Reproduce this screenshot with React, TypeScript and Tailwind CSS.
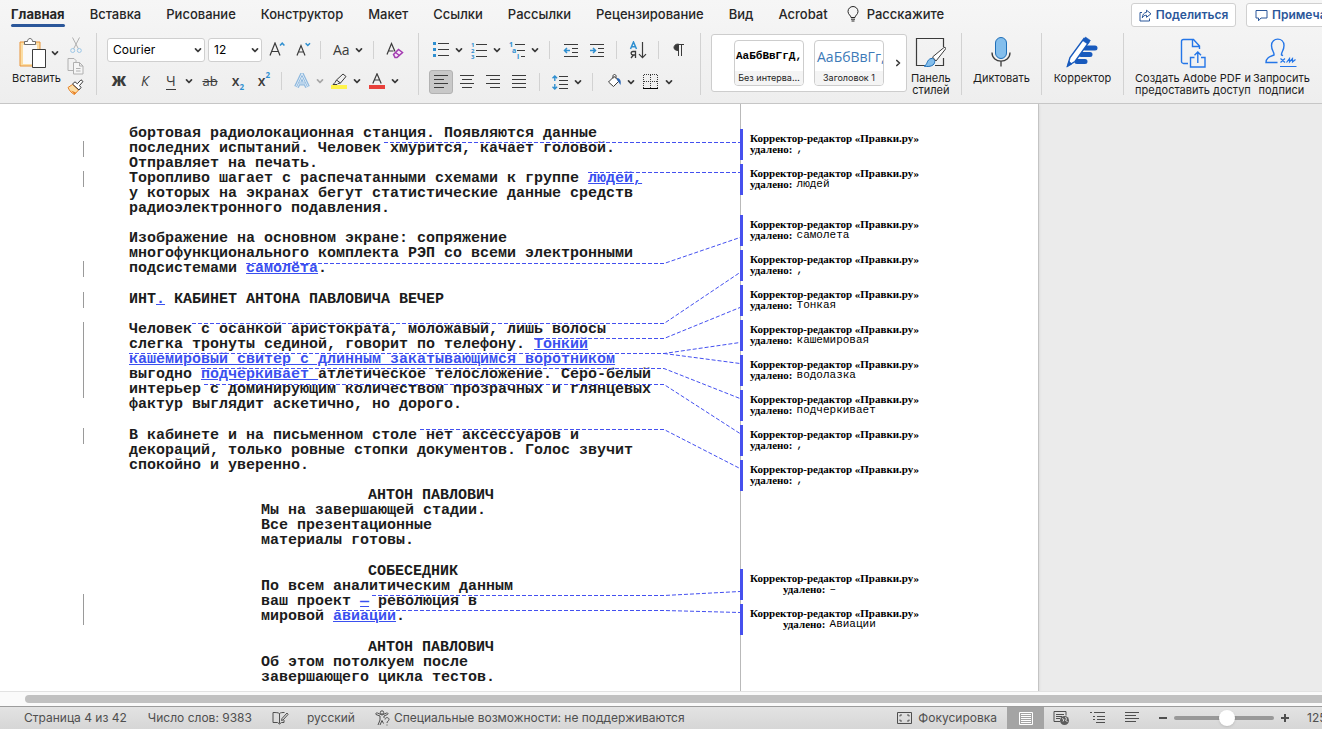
import type { ReactNode } from "react";
import clsx from "clsx";

const tabs = [
  "Вставка",
  "Рисование",
  "Конструктор",
  "Макет",
  "Ссылки",
  "Рассылки",
  "Рецензирование",
  "Вид",
  "Acrobat",
];

type Part = string | { ins: string };
type Line = { parts: Part[]; changed?: boolean; cue?: boolean };
type Block = { gap: string; indent?: boolean; lines: Line[] };

const l = (...parts: Part[]): Line => ({ parts });
const c = (...parts: Part[]): Line => ({ parts, changed: true });
const cue = (name: string): Line => ({ parts: [name], cue: true });
const ins = (text: string) => ({ ins: text });

const script: Block[] = [
  {
    gap: "mb-[15px]",
    lines: [
      l("бортовая радиолокационная станция. Появляются данные"),
      c("последних испытаний. Человек хмурится, качает головой."),
      l("Отправляет на печать."),
      c("Торопливо шагает с распечатанными схемами к группе ", ins("людей,")),
      l("у которых на экранах бегут статистические данные средств"),
      l("радиоэлектронного подавления."),
    ],
  },
  {
    gap: "mb-4",
    lines: [
      l("Изображение на основном экране: сопряжение"),
      l("многофункционального комплекта РЭП со всеми электронными"),
      c("подсистемами ", ins("самолёта"), "."),
    ],
  },
  {
    gap: "mb-[15px]",
    lines: [c("ИНТ", ins("."), " КАБИНЕТ АНТОНА ПАВЛОВИЧА ВЕЧЕР")],
  },
  {
    gap: "mb-4",
    lines: [
      c("Человек с осанкой аристократа, моложавый, лишь волосы"),
      c("слегка тронуты сединой, говорит по телефону. ", ins("Тонкий")),
      c(ins("кашемировый свитер с длинным закатывающимся воротником")),
      c(
        "выгодно ",
        ins("подчёркивает "),
        "атлетическое телосложение. Серо-белый"
      ),
      c("интерьер с доминирующим количеством прозрачных и глянцевых"),
      l("фактур выглядит аскетично, но дорого."),
    ],
  },
  {
    gap: "mb-[15px]",
    lines: [
      c("В кабинете и на письменном столе нет аксессуаров и"),
      l("декораций, только ровные стопки документов. Голос звучит"),
      l("спокойно и уверенно."),
    ],
  },
  {
    gap: "mb-4",
    indent: true,
    lines: [
      cue("АНТОН ПАВЛОВИЧ"),
      l("Мы на завершающей стадии."),
      l("Все презентационные"),
      l("материалы готовы."),
    ],
  },
  {
    gap: "mb-4",
    indent: true,
    lines: [
      cue("СОБЕСЕДНИК"),
      l("По всем аналитическим данным"),
      c("ваш проект ", ins("—"), " революция в"),
      c("мировой ", ins("авиации"), "."),
    ],
  },
  {
    gap: "mb-0",
    indent: true,
    lines: [
      cue("АНТОН ПАВЛОВИЧ"),
      l("Об этом потолкуем после"),
      l("завершающего цикла тестов."),
    ],
  },
];

const commentGroups = [
  { indent: false, items: [",", "людей"] },
  {
    indent: false,
    items: [
      "самолета",
      ",",
      "Тонкая",
      "кашемировая",
      "водолазка",
      "подчеркивает",
      ",",
      ",",
    ],
  },
  { indent: true, items: ["–", "Авиации"] },
];
const commentOffsets = ["mt-[25px]", "mt-5", "mt-[78px]"];

// from the changed word, along the line, then out to its comment
const connectors = [
  "384,38.5 740,38.5",
  "588,68.5 740,68.5",
  "246,159.5 664,159.5 740,133.5",
  "192,219.5 664,219.5 740,168.5",
  "534,234.5 664,234.5 740,203.5",
  "129,249.5 664,249.5 740,238.5",
  "664,249.5 740,259.5",
  "201,264.5 664,264.5 740,294.5",
  "204,280.5 664,280.5 740,329.5",
  "420,325.5 664,325.5 740,364.5",
  "372,491.5 664,491.5 740,487.5",
  "336,506.5 664,506.5 740,508.5",
];

function Chevron({ className }: { className?: string }) {
  return (
    <svg
      viewBox="0 0 8 8"
      className={clsx("size-2 shrink-0 text-[#3b3b3b]", className)}
      fill="none"
      stroke="currentColor"
      strokeWidth="1.7"
      strokeLinecap="round"
      strokeLinejoin="round"
    >
      <path d="M1.5 2.8 4 5.5 6.5 2.8" />
    </svg>
  );
}

function Sep({ className }: { className?: string }) {
  return <div className={clsx("h-[18px] w-px shrink-0 bg-[#d2d2d2]", className)} />;
}

function Tool({
  label,
  children,
  className = "w-[26px]",
  menu,
  muted,
}: {
  label: string;
  children: ReactNode;
  className?: string;
  menu?: boolean;
  muted?: boolean;
}) {
  return (
    <button
      aria-label={label}
      className={clsx(
        "flex h-6 shrink-0 items-center leading-5 text-[#3b3b3b]",
        menu ? "justify-between" : "justify-center",
        className
      )}
    >
      {children}
      {menu && <Chevron className={muted ? "opacity-40" : undefined} />}
    </button>
  );
}

function Icon({
  w,
  h,
  children,
  className,
}: {
  w: number;
  h: number;
  children: ReactNode;
  className?: string;
}) {
  return (
    <svg
      width={w}
      height={h}
      viewBox={`0 0 ${w} ${h}`}
      fill="none"
      stroke="currentColor"
      className={clsx("shrink-0", className)}
    >
      {children}
    </svg>
  );
}

function BigButton({ lines, children }: { lines: string[]; children: ReactNode }) {
  return (
    <button className="flex shrink-0 flex-col items-center whitespace-nowrap text-[11px] leading-3 text-[#1d1d1d]">
      <span className="mb-1 flex h-8 items-center">{children}</span>
      {lines.map((line) => (
        <span key={line}>{line}</span>
      ))}
    </button>
  );
}

function StyleCard({ sample, name, heading }: { sample: string; name: string; heading?: boolean }) {
  return (
    <button className="flex h-[46px] w-[70px] flex-col overflow-hidden rounded-[4px] border border-[#cdcdcd] bg-white">
      <span
        className={clsx(
          "flex h-[30px] w-full items-center whitespace-nowrap",
          heading
            ? "pl-[2px] font-['Open_Sans'] text-[14px] text-[#3d7ab8]"
            : "pl-px font-['Liberation_Mono'] text-[11px] font-bold text-black"
        )}
      >
        {sample}
      </span>
      <span className="w-full flex-1 bg-[#f4f4f4] text-center text-[9px] leading-[14px] text-[#1d1d1d]">
        {name}
      </span>
    </button>
  );
}

function TabBar() {
  return (
    <nav className="flex h-[30px] items-start pl-[11px] text-[13px] font-medium text-[#262626]">
      <div className="flex shrink-0 gap-[25px] whitespace-nowrap pt-1">
        <button className="flex flex-col font-bold leading-5">
          Главная
          <span className="h-[3px] w-full rounded-full bg-[#2b579a]" />
        </button>
        {tabs.map((tab) => (
          <button key={tab} className="h-5 leading-5">
            {tab}
          </button>
        ))}
        <button className="-ml-[6px] flex h-5 items-center gap-2 leading-5">
          <Icon w={12} h={16}>
            <path d="M4 11.5C4 9.5 1 8.500 1 5.500a5 5 0 0 1 10 0c0 3-3 4-3 6zM4 13.200h4M4.500 15h3" strokeWidth="1" />
          </Icon>
          Расскажите
        </button>
      </div>
      <div className="ml-auto flex w-[191px] shrink-0 gap-[10px] pt-[3px] font-semibold text-[#2b579a]">
        <button className="flex h-6 w-[105px] shrink-0 items-center justify-center gap-1 rounded-[3px] border border-[#d0d0d0] bg-white text-[12px]">
          <Icon w={13} h={13}>
            <path d="M3 3.500H1v8.500h9.500V9.500M7.500 1.200 12 4.800 7.500 8.300V6.200C5.500 6.200 4.300 7 3.300 8.800 3.500 5.500 5 3.600 7.500 3.300z" strokeLinejoin="round" />
          </Icon>
          Поделиться
        </button>
        <button className="flex h-6 w-[105px] shrink-0 items-center gap-1 rounded-[3px] border border-[#d0d0d0] bg-white pl-2 text-[12px]">
          <Icon w={13} h={13}>
            <path d="M1 1.500h11v7.500H6L3.500 11.800V9H1z" strokeLinejoin="round" />
          </Icon>
          Примечания
        </button>
      </div>
    </nav>
  );
}

function ClipboardGroup() {
  return (
    <div className="flex w-24 shrink-0 pl-3">
      <button className="flex w-[48px] flex-col items-start text-[11px] leading-3 text-[#1d1d1d]">
        <span className="mb-1 flex h-[35px] items-center gap-1 pl-[7px] pt-1">
          <Icon w={28} h={32}>
            <path d="M1 5h20v24H1z" fill="#fbdda4" stroke="#e8953a" />
            <path d="M4 8h14v19H4z" fill="#fafafa" stroke="none" />
            <path d="M5.500 7.500V4.500h3c0-4 5-4 5 0h3v3z" fill="#fff" stroke="#6b6b6b" />
            <path d="M13.500 12.500h13v18h-13z" fill="#fff" stroke="#3b3b3b" />
          </Icon>
          <Chevron />
        </span>
        Вставить
      </button>
      <div className="ml-[7px] flex flex-col items-center gap-1 pt-1">
        <button aria-label="Вырезать">
          <Icon w={12} h={17}>
            <path d="M2.500 0.500 8.500 12M9.500 0.500 3.500 12" stroke="#b0b0b0" />
            <circle cx="2.700" cy="13.500" r="2" stroke="#9cc6e6" />
            <circle cx="9.300" cy="13.500" r="2" stroke="#9cc6e6" />
          </Icon>
        </button>
        <button aria-label="Копировать">
          <Icon w={17} h={17} className="text-[#b0b0b0]">
            <path d="M6 12.500H1V0.500h6l2 2V5" />
            <path d="M6.500 4.500h6l3.500 3.500v8H6.500zM12.500 4.500V8H16M9 10.500h4.500M9 13h4.500" fill="#f5f5f5" />
          </Icon>
        </button>
        <button aria-label="Формат по образцу">
          <Icon w={17} h={16}>
            <path d="M1 8.500 5.500 5.500l6 5.500-4 4.500C5 14.500 2.500 12 1 8.500z" fill="#fbdda4" stroke="#e8832a" />
            <path d="M4 11.500l5 2-1.500 2z" fill="#e8832a" stroke="none" />
            <path d="M5.500 5 8 2.800l2.300 2 3.700-4 2 1.700-3.500 4 1.500 2-2 2.500z" fill="#fff" stroke="#3b3b3b" />
          </Icon>
        </button>
      </div>
    </div>
  );
}

function FontGroup() {
  return (
    <div className="flex w-[322px] shrink-0 flex-col gap-2 border-l border-[#d2d2d2] pl-[10px] pt-[5px]">
      <div className="flex h-6 items-center">
        <label className="relative mr-[3px] flex">
          <select
            aria-label="Шрифт"
            className="h-6 w-[98px] appearance-none rounded-[3px] border border-[#cfcfcf] bg-white pl-[5px] text-[12px] text-black"
          >
            <option>Courier</option>
          </select>
          <Chevron className="absolute right-[3px] top-2" />
        </label>
        <label className="relative mr-[2px] flex">
          <select
            aria-label="Размер шрифта"
            className="h-6 w-[54px] appearance-none rounded-[3px] border border-[#cfcfcf] bg-white pl-[5px] text-[12px] text-black"
          >
            <option>12</option>
          </select>
          <Chevron className="absolute right-[3px] top-2" />
        </label>
        <Tool label="Увеличить размер">
          <Icon w={16} h={16}>
            <path d="M1 13.500 6 1l5 12.500M2.800 9.500h6.500" strokeWidth="1.200" />
            <path d="M11 3.500 13.200 1.200 15.400 3.500" stroke="#2f8fd0" strokeWidth="1.500" />
          </Icon>
        </Tool>
        <Tool label="Уменьшить размер">
          <Icon w={16} h={16}>
            <path d="M2 13.500 6 3.500l4 10M3.500 10h5" strokeWidth="1.200" />
            <path d="M10.600 1.200 12.800 3.500 15 1.200" stroke="#2f8fd0" strokeWidth="1.500" />
          </Icon>
        </Tool>
        <Sep className="ml-1 mr-3" />
        <Tool label="Регистр" menu className="w-[30px] font-['Open_Sans'] text-[14px]">
          Aa
        </Tool>
        <Sep className="ml-[10px] mr-2" />
        <Tool label="Очистить форматирование">
          <Icon w={18} h={17}>
            <path d="M1 12.500 5.500 1.500 9 9.500M2.500 9h5" strokeWidth="1.200" />
            <path d="M7.500 12.500 12.500 7.500 16.500 10.500 11 15.500 9 15.500z" fill="#f5e6f7" stroke="#a33bb0" strokeWidth="1.500" />
            <path d="M9.500 10.500 13.500 13.500" stroke="#a33bb0" strokeWidth="1.500" />
          </Icon>
        </Tool>
      </div>
      <div className="flex h-[22px] items-center font-['Open_Sans'] text-[14px]">
        <Tool label="Полужирный" className="w-6 font-extrabold">Ж</Tool>
        <Tool label="Курсив" className="w-7 italic">К</Tool>
        <Tool label="Подчеркнутый" menu className="w-[34px] pl-[7px]">
          <span className="border-b border-[#3b3b3b] leading-4">Ч</span>
        </Tool>
        <Tool label="Зачеркнутый" className="w-[34px] text-[13px] line-through">ab</Tool>
        <Tool label="Подстрочный" className="w-[22px]">
          <span className="font-semibold">x</span>
          <span className="pt-3 text-[8px] font-bold text-[#2f8fd0]">2</span>
        </Tool>
        <Tool label="Надстрочный" className="w-[30px]">
          <span className="font-semibold">x</span>
          <span className="pb-3 text-[8px] font-bold text-[#2f8fd0]">2</span>
        </Tool>
        <Sep className="ml-[2px] mr-3" />
        <Tool label="Текстовые эффекты" menu muted className="mr-[7px] w-[30px]">
          <Icon w={16} h={16}>
            <path d="M2.500 14 8 2.500 13.500 14M5 10h6" stroke="#8fb9de" strokeWidth="5" />
            <path d="M2.500 14 8 2.500 13.500 14M5 10h6" stroke="#e4eef8" strokeWidth="2.500" />
            <path d="M2.500 14 8 2.500 13.500 14M5 10h6" stroke="#8fb9de" strokeWidth="1" />
          </Icon>
        </Tool>
        <Tool label="Цвет выделения" menu className="mr-2 w-[30px]">
          <Icon w={16} h={16}>
            <path d="M5.500 7 12 1l3 2.500L9.500 10zM5.500 7 4 9.500 2 11.500h4l1-1L9.500 10" />
            <path d="M0 12h16v4H0z" fill="#fff34a" stroke="none" />
          </Icon>
        </Tool>
        <Tool label="Цвет текста" menu className="w-[30px]">
          <Icon w={16} h={16}>
            <path d="M3.800 10.500 8 .8l4.200 9.700M5.300 7h5.400" strokeWidth="1.200" />
            <path d="M0 12h16v4H0z" fill="#e8403a" stroke="none" />
          </Icon>
        </Tool>
      </div>
    </div>
  );
}

function ParagraphGroup() {
  return (
    <div className="flex w-[282px] shrink-0 flex-col gap-2 border-l border-[#d2d2d2] pl-[10px] pt-[5px]">
      <div className="flex h-6 items-center">
        <Tool label="Маркеры" menu className="ml-1 mr-2 w-[30px]">
          <Icon w={16} h={16}>
            <path d="M5 1.500h11M5 7.500h11M5 13.500h11" />
            <path d="M0 0h3v3H0zM0 6h3v3H0zM0 12h3v3H0z" fill="#2f8fd0" stroke="none" />
          </Icon>
        </Tool>
        <Tool label="Нумерация" menu className="mr-2 w-[30px]">
          <Icon w={16} h={17}>
            <path d="M5 2.500h11M5 8.500h11M5 14.500h11" />
            <g fill="#2f8fd0" stroke="none" fontFamily="Open Sans" fontSize="6" fontWeight="700">
              <text x="0" y="5">1</text>
              <text x="0" y="11">2</text>
              <text x="0" y="17">3</text>
            </g>
          </Icon>
        </Tool>
        <Tool label="Многоуровневый список" menu className="mr-[10px] w-[30px]">
          <Icon w={17} h={17}>
            <path d="M6 2.500h10M8 8.500h8M12 14.500h4" />
            <g fill="#2f8fd0" stroke="none" fontFamily="Open Sans" fontSize="7" fontWeight="700">
              <text x="0" y="5">1</text>
              <text x="3" y="11">a</text>
              <text x="8" y="17">i</text>
            </g>
          </Icon>
        </Tool>
        <Sep className="mr-2" />
        <Tool label="Уменьшить отступ">
          <Icon w={16} h={15}>
            <path d="M1 1.500h14M9 5.500h6M9 9.500h6M1 13.500h14" />
            <path d="M7 7.500H1.500M4 5 1.500 7.500 4 10" stroke="#2f8fd0" strokeWidth="1.500" />
          </Icon>
        </Tool>
        <Tool label="Увеличить отступ">
          <Icon w={16} h={15}>
            <path d="M1 1.500h14M9 5.500h6M9 9.500h6M1 13.500h14" />
            <path d="M1 7.500h5.500M4 5l2.500 2.500L4 10" stroke="#2f8fd0" strokeWidth="1.500" />
          </Icon>
        </Tool>
        <Sep className="ml-[6px] mr-2" />
        <Tool label="Сортировка">
          <Icon w={18} h={18}>
            <path d="M13.500 1v15.500M10 13.200 13.500 16.700 17 13.200" strokeWidth="1.200" />
            <path d="M1.500 8 4.500 1 7.500 8M2.500 5.800h4" stroke="#2f8fd0" strokeWidth="1.500" />
            <path d="M6.500 17v-6.500H4c-2.500 0-2.500 3.500 0 3.500h2.500M4.500 14 2 17" strokeWidth="1.300" />
          </Icon>
        </Tool>
        <Sep className="mx-[7px]" />
        <Tool label="Непечатаемые знаки">
          <Icon w={12} h={14}>
            <path d="M5.500 13V1.500H11M8.500 1.500V13" />
            <path d="M5.500 1v6.500C-0.500 8-0.500 1 5.500 1z" fill="#3b3b3b" />
          </Icon>
        </Tool>
      </div>
      <div className="flex h-6 items-center">
        <Tool label="По левому краю" className="w-6 rounded-[3px] border border-[#b2b2b2] bg-[#c8c8c8]">
          <Icon w={14} h={14}>
            <path d="M0 0.500h14M0 4.500h10M0 8.500h14M0 12.500h10" />
          </Icon>
        </Tool>
        <Tool label="По центру" className="ml-[1px] w-[26px]">
          <Icon w={14} h={14}>
            <path d="M0 0.500h14M2 4.500h10M0 8.500h14M2 12.500h10" />
          </Icon>
        </Tool>
        <Tool label="По правому краю">
          <Icon w={14} h={14}>
            <path d="M0 0.500h14M4 4.500h10M0 8.500h14M4 12.500h10" />
          </Icon>
        </Tool>
        <Tool label="По ширине">
          <Icon w={14} h={14}>
            <path d="M0 0.500h14M0 4.500h14M0 8.500h14M0 12.500h14" />
          </Icon>
        </Tool>
        <Sep className="ml-[7px] mr-3" />
        <Tool label="Интервал" menu className="w-[30px]">
          <Icon w={17} h={15}>
            <path d="M7 1.500h9M7 5.500h9M7 9.500h9M7 13.500h9" />
            <path d="M2.800 1v5M2.800 9v5M0.500 3.300 2.800 1 5.100 3.300M0.500 11.700 2.800 14 5.100 11.700" stroke="#2f8fd0" strokeWidth="1.400" />
          </Icon>
        </Tool>
        <Sep className="ml-[10px] mr-[14px]" />
        <Tool label="Заливка" menu className="mr-2 w-[28px]">
          <Icon w={15} h={16}>
            <path d="M1.500 8 7 2.500l5 4.500-5.500 5.500zM6 4.500V2c0-2 3-2 3 0v2" fill="#fff" />
            <path d="M10 4c3 0 4.500 3 3.500 7-1-1-1.500-3-3.500-5z" fill="#2b66b4" stroke="none" />
          </Icon>
        </Tool>
        <Tool label="Границы" menu className="w-[30px]">
          <Icon w={16} h={16}>
            <path d="M1 .5h14M.5 1v13M14.500 1v13M1 7.500h14M7.500 1v13" strokeDasharray="1 1" />
            <path d="M0 14.500h15" stroke="#000" />
          </Icon>
        </Tool>
      </div>
    </div>
  );
}

function StylesGroup() {
  return (
    <div className="flex w-[261px] shrink-0 border-l border-[#d2d2d2] pl-[10px]">
      <div className="mt-px flex h-[58px] w-[196px] items-center gap-[10px] rounded-[3px] border border-[#cdcdcd] bg-white pl-[22px]">
        <StyleCard sample="АаБбВвГгД," name="Без интерва…" />
        <StyleCard sample="АаБбВвГг," name="Заголовок 1" heading />
        <button aria-label="Другие стили">
          <Chevron className="-rotate-90" />
        </button>
      </div>
      <div className="flex flex-1 justify-start pl-1 pt-[3px]">
        <BigButton lines={["Панель", "стилей"]}>
          <Icon w={31} h={32}>
            <path d="M11 29.500H1.500V2.500h27V11M28.500 22v7.500H20" strokeWidth="1.200" stroke="#3b3b3b" fill="none" />
            <path d="M17.500 21 29 11.500c1.500-.5 2 .5 1.500 1.500L21 25z" fill="#fff" stroke="#3b3b3b" />
            <path d="M9 30c4-1 2-6 7-7.500 4-.5 5 4 2 6.500-2 1.500-6 2-9 1z" fill="#83beec" stroke="#1f6fb8" />
          </Icon>
        </BigButton>
      </div>
    </div>
  );
}

function Ribbon() {
  return (
    <header className="shrink-0 overflow-hidden border-b border-[#c6c6c6] bg-linear-to-b from-[#f6f6f6] to-[#eeeeee]">
      <TabBar />
      <div className="mb-2 mt-[3px] flex h-[62px]">
        <ClipboardGroup />
        <FontGroup />
        <ParagraphGroup />
        <StylesGroup />
        <div className="flex w-20 shrink-0 justify-center border-l border-[#d2d2d2] pt-[3px]">
          <BigButton lines={["Диктовать"]}>
            <Icon w={20} h={32}>
              <rect x="4.500" y="1.500" width="11" height="21" rx="5.500" fill="#83beec" stroke="#1f6fb8" />
              <path d="M1 16.500c0 11.500 18 11.500 18 0M10 25.500V30.500" stroke="#3b3b3b" strokeWidth="1.300" />
            </Icon>
          </BigButton>
        </div>
        <div className="flex w-[82px] shrink-0 justify-center border-l border-[#d2d2d2] pt-[3px]">
          <BigButton lines={["Корректор"]}>
            <Icon w={32} h={32}>
              <path d="M19 12h10M15 18.500h9M11 25.500h8" stroke="#185abd" strokeWidth="5" strokeLinecap="round" />
              <path d="M1.500 30 4 21.500 18 2.500l5 3.500L9 25.500z" fill="#fff" stroke="#185abd" strokeWidth="1.400" />
              <path d="M16.500 4.500 19.500 1l5 3.500L21.500 8zM1 31l2-6 3 3z" fill="#185abd" stroke="#185abd" strokeWidth=".5" />
            </Icon>
          </BigButton>
        </div>
        <div className="flex shrink-0 gap-[2px] border-l border-[#d2d2d2] pl-[11px] pt-[3px] text-[#2476e8]">
          <BigButton lines={["Создать Adobe PDF и", "предоставить доступ"]}>
            <Icon w={26} h={32} className="text-[#2476e8]">
              <path d="M8 27.500H3.500c-1 0-2-1-2-2v-20c0-1 1-2 2-2h10l6 6.500v3M12.500 4v6.500h6.500" strokeWidth="1.400" />
              <path d="M14.500 21.500h-4V31h14.500V21.500h-4M17.800 27V16M14.500 19.200 17.800 16 21 19.200" strokeWidth="1.400" />
            </Icon>
          </BigButton>
          <BigButton lines={["Запросить", "подписи"]}>
            <Icon w={32} h={32} className="text-[#2476e8]">
              <path d="M12.500 26.500H1c0-4.500 3-5.500 8-7.500.5-3-2.500-4-2.500-9.500 0-8.500 12.500-8.500 12.500 0 0 5.500-3 6.500-2.500 9.500l1.500.7" strokeWidth="1.400" />
              <path d="M15.500 22.500l4.500 4M20 22.500l-4.500 4M21.500 26.500l3-4v3.500l3-3.500v3.500l3-2.500M15 30.500h16.500" strokeWidth="1.200" />
            </Icon>
          </BigButton>
        </div>
      </div>
    </header>
  );
}

function Script() {
  return (
    <article className="w-[740px] shrink-0 whitespace-pre pl-[129px] pt-[22px] font-['Liberation_Mono',monospace] text-[15px] font-bold leading-[15px] text-[#1c1c1c]">
      {script.map((block, i) => (
        <div key={i} className={block.gap}>
          {block.lines.map((line, j) => (
            <p
              key={j}
              className={clsx("relative", line.cue ? "pl-[239px]" : block.indent && "pl-[132px]")}
            >
              {line.changed && (
                <span className="absolute -left-[46px] top-0 h-4 w-px bg-[#9a9a9a]" />
              )}
              {line.parts.map((part, k) =>
                typeof part === "string" ? (
                  part
                ) : (
                  <ins
                    key={k}
                    className="text-[#3a50f0] underline decoration-1 underline-offset-1"
                  >
                    {part.ins}
                  </ins>
                )
              )}
            </p>
          ))}
        </div>
      ))}
    </article>
  );
}

function Comments() {
  return (
    <aside className="flex-1 border-l border-[#b9b9b9] font-['Liberation_Serif',serif] text-[11px] leading-[11px] text-black">
      {commentGroups.map((group, i) => (
        <div key={i} className={clsx("-ml-px flex flex-col gap-1", commentOffsets[i])}>
          {group.items.map((text, j) => (
            <div
              key={j}
              className="h-[31px] border-l-[3px] border-[#4650ee] pl-[7px] pt-1"
            >
              <p className="font-bold">Корректор-редактор «Правки.ру»</p>
              <p className={clsx("flex gap-1", group.indent && "pl-[33px]")}>
                <b>удалено:</b>
                <span className="font-['Liberation_Mono',monospace]">{text}</span>
              </p>
            </div>
          ))}
        </div>
      ))}
    </aside>
  );
}

function StatusBar() {
  return (
    <footer className="flex h-[23px] shrink-0 items-center overflow-hidden whitespace-nowrap border-t border-[#9c9c9c] bg-linear-to-b from-[#e3e3e3] to-[#d6d6d6] pl-6 text-[12px] text-[#4f4f4f]">
      <button className="mr-[21px]">Страница 4 из 42</button>
      <button className="mr-5">Число слов: 9383</button>
      <button aria-label="Правописание" className="mr-[18px]">
        <Icon w={17} h={14}>
          <path d="M7.500 2.500v10M7.500 2.500C6 1.500 4 1.500 1 1.500v10h4.500l2 1.500 2-1.500H12V9M7.500 2.500c1-1 3-1 5-1" />
          <path d="M9.500 9.500 10 7.500 15 2l1 1.500L11 9z" />
        </Icon>
      </button>
      <button className="mr-5">русский</button>
      <button className="flex items-center gap-1">
        <Icon w={15} h={16}>
          <circle cx="7" cy="2.500" r="1.700" />
          <path d="M1 4.500 5 6v4l-2 5M1 4.500C0.500 3 1.500 2.500 2.500 3L7 5l4.500-2c1.500-.5 2 1 1 1.500L9 6v2M7 10.500 5 15M7 10.500l1.500 3" />
          <path d="M10 9.500c0-2.500 4-2.500 4 0 0 1.500-2 1.500-2 3.500M12 14.500v1" />
        </Icon>
        Специальные возможности: не поддерживаются
      </button>
      <button className="ml-auto mr-[10px] flex items-center gap-[6px]">
        <Icon w={15} h={12}>
          <path d="M.5 .5h14v11H.5zM3 4.500V3h2M10 3h2v1.500M12 7.500V9h-2M5 9H3V7.500" />
        </Icon>
        Фокусировка
      </button>
      <button
        aria-label="Разметка страницы"
        className="flex h-full w-[37px] items-center justify-center bg-[#a4a4a4] text-white"
      >
        <Icon w={14} h={13}>
          <path d="M.5 .5h13v12H.5zM2 2.500h10M2 4.500h10M2 6.500h10M2 8.500h10M2 10.500h10" />
        </Icon>
      </button>
      <button aria-label="Веб-документ" className="ml-[9px] w-[17px]">
        <Icon w={17} h={15}>
          <path d="M7 10.500H1V.5h12v4M3 3.500h8M3 5.500h6M3 7.500h4" />
          <circle cx="11.500" cy="9.500" r="4.500" fill="#5c5c5c" stroke="none" />
          <path d="M9 7.500l2 1-1 2M12.500 6l1 2-1 1.500 2 1" stroke="#ddd" />
        </Icon>
      </button>
      <button aria-label="Структура" className="ml-5 w-[15px]">
        <Icon w={15} h={12}>
          <path d="M0 .5h2M4 .5h11M3 4.500h2M7 4.500h8M3 7.500h2M7 7.500h8M6 10.500h9" />
        </Icon>
      </button>
      <button aria-label="Черновик" className="ml-5 w-[14px]">
        <Icon w={14} h={12}>
          <path d="M0 .5h14M0 3.500h11M0 6.500h14M0 9.500h11" />
        </Icon>
      </button>
      <button aria-label="Уменьшить масштаб" className="ml-5 w-2">
        <Icon w={8} h={10}>
          <path d="M0 5h8" strokeWidth="2" />
        </Icon>
      </button>
      <input
        type="range"
        aria-label="Масштаб"
        defaultValue={54}
        className="ml-[7px] h-1 w-[100px] appearance-none rounded-full bg-[#989898] [&::-webkit-slider-thumb]:size-4 [&::-webkit-slider-thumb]:appearance-none [&::-webkit-slider-thumb]:rounded-full [&::-webkit-slider-thumb]:bg-white [&::-webkit-slider-thumb]:shadow"
      />
      <button aria-label="Увеличить масштаб" className="ml-[7px] w-2">
        <Icon w={8} h={10}>
          <path d="M0 5h8M4 1v8" strokeWidth="2" />
        </Icon>
      </button>
      <button className="ml-[18px] w-[15px]">125%</button>
    </footer>
  );
}

export default function App() {
  return (
    <div className="flex h-screen flex-col overflow-hidden bg-[#ebebeb] font-['Inter',sans-serif]">
      <Ribbon />
      <main className="flex min-h-0 flex-1 overflow-hidden">
        <div className="relative flex w-[1039px] shrink-0 border-r border-[#c4c4c4] bg-white shadow">
          <Script />
          <Comments />
          <svg
            className="pointer-events-none absolute left-0 top-0 h-full w-full"
            fill="none"
            stroke="#4450f0"
            strokeDasharray="4 2"
          >
            {connectors.map((points) => (
              <polyline key={points} points={points} />
            ))}
          </svg>
        </div>
      </main>
      <div className="h-[15px] shrink-0 border-t border-[#e2e2e2] bg-[#fafafa] pl-[25px] pt-[3px]">
        <div className="h-2 rounded-l-full bg-[#c1c1c1]" />
      </div>
      <StatusBar />
    </div>
  );
}
